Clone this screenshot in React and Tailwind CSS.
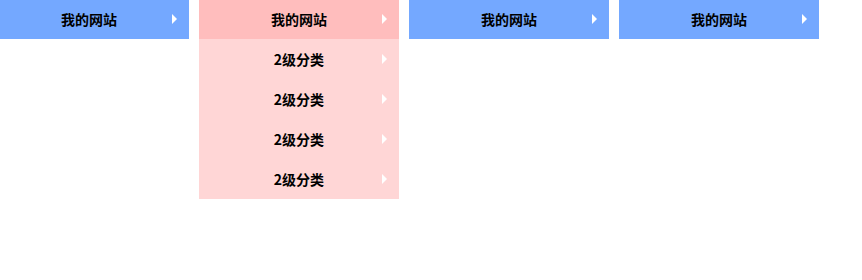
const SUB = ["2级分类", "2级分类", "2级分类", "2级分类"];

function Arrow() {
  return (
    <span className="absolute right-[12px] top-1/2 -translate-y-1/2 h-0 w-0 border-y-[5px] border-l-[5px] border-y-transparent border-l-white" />
  );
}

function Item({ label, bg }) {
  return (
    <div className={`relative flex h-10 items-center justify-center text-[14px] font-bold text-black ${bg}`}>
      {label}
      <Arrow />
    </div>
  );
}

export default function App() {
  const menus = [false, true, false, false];
  return (
    <div
      className="h-[280px] w-[862px] overflow-hidden bg-white"
      style={{ fontFamily: '"Microsoft YaHei", "Noto Sans CJK SC", sans-serif' }}
    >
      <div className="-ml-[11px] -mt-px flex items-start gap-[10px]">
        {menus.map((open, i) => (
          <div key={i} className="w-[200px] shrink-0">
            <Item label="我的网站" bg={open ? "bg-[#ffbdbd]" : "bg-[#74a8ff]"} />
            {open &&
              SUB.map((s, j) => <Item key={j} label={s} bg="bg-[#ffd6d6]" />)}
          </div>
        ))}
      </div>
    </div>
  );
}
